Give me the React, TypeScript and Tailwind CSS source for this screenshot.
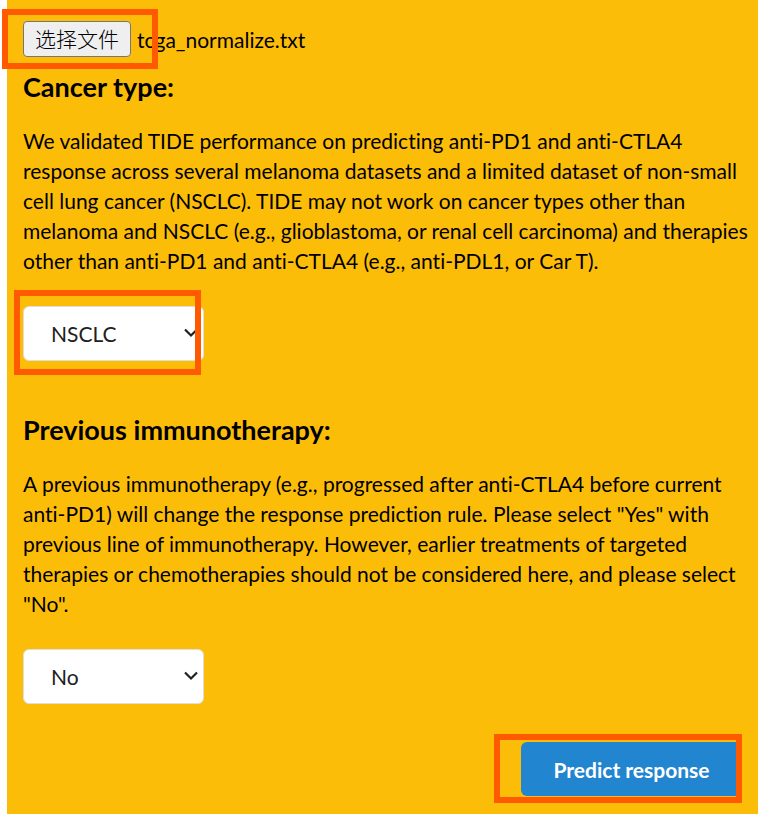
import { useRef, useState, type ReactNode } from "react";

type HighlightProps = { className: string };

/** Orange frame that calls attention to the control beneath it. */
function Highlight({ className }: HighlightProps) {
  return (
    <span
      aria-hidden="true"
      className={`pointer-events-none absolute border-[6px] border-[#ff5a00] ${className}`}
    />
  );
}

type SelectFieldProps = {
  id: string;
  labelledBy: string;
  options: string[];
  initial: string;
  children?: ReactNode;
};

function SelectField({ id, labelledBy, options, initial, children }: SelectFieldProps) {
  const [value, setValue] = useState(initial);
  return (
    <div className="relative mt-[30px] w-[181px]">
      <select
        id={id}
        aria-labelledby={labelledBy}
        value={value}
        onChange={(e) => setValue(e.target.value)}
        className="block h-[55px] w-full appearance-none rounded-md border border-[#dedede] bg-white pr-8 pl-[27px] text-[21px] text-[#212121]"
      >
        {options.map((option) => (
          <option key={option}>{option}</option>
        ))}
      </select>
      <svg
        aria-hidden="true"
        viewBox="0 0 14 10"
        className="pointer-events-none absolute top-[22px] right-[6px] h-[10px] w-[14px]"
        fill="none"
        stroke="#212121"
        strokeWidth="2.2"
      >
        <path d="M1 1.5 7 7.5 13 1.5" />
      </svg>
      {children}
    </div>
  );
}

export default function App() {
  const fileInput = useRef<HTMLInputElement>(null);
  const [fileName, setFileName] = useState("tcga_normalize.txt");

  return (
    <div className="min-h-screen bg-white pl-[7px] font-['Lato','Noto_Sans_CJK_SC',sans-serif] text-[21px] leading-[30px] text-black [font-variant-ligatures:none]">
      <form
        className="min-h-screen bg-[#fcbd09] px-4 pt-[21px] pb-[18px]"
        onSubmit={(e) => e.preventDefault()}
      >
        <div className="relative flex items-center gap-[6px]">
          <button
            type="button"
            onClick={() => fileInput.current?.click()}
            className="h-9 w-[108px] rounded-[4px] border border-[#767676] bg-[#efefef] pb-0.5 font-['Noto_Sans_CJK_SC',sans-serif] text-[21px] leading-[30px] font-light"
          >
            选择文件
          </button>
          <span className="pt-0.5">{fileName}</span>
          <input
            ref={fileInput}
            type="file"
            hidden
            aria-label="选择文件"
            onChange={(e) => setFileName(e.target.files?.[0]?.name ?? fileName)}
          />
          <Highlight className="-top-3 -left-[21px] h-[60px] w-[156px]" />
        </div>

        <h3 id="cancer-heading" className="mt-[13px] text-[27px] leading-[34px] font-bold">
          Cancer type:
        </h3>
        <p className="mt-[22px] -mr-3">
          We validated TIDE performance on predicting anti-PD1 and anti-CTLA4 response across
          several melanoma datasets and a limited dataset of non-small cell lung cancer (NSCLC).
          TIDE may not work on cancer types other than melanoma and NSCLC (e.g., glioblastoma, or
          renal cell carcinoma) and therapies other than anti-PD1 and anti-CTLA4 (e.g., anti-PDL1,
          or Car T).
        </p>
        <SelectField
          id="cancer"
          labelledBy="cancer-heading"
          options={["Melanoma", "NSCLC", "Other"]}
          initial="NSCLC"
        >
          <Highlight className="-top-4 -left-[9px] h-[85px] w-[187px]" />
        </SelectField>

        <h3 id="previous-heading" className="mt-[52px] text-[27px] leading-[34px] font-bold">
          Previous immunotherapy:
        </h3>
        <p className="mt-[22px] -mr-3">
          A previous immunotherapy (e.g., progressed after anti-CTLA4 before current anti-PD1) will
          change the response prediction rule. Please select "Yes" with previous line of
          immunotherapy. However, earlier treatments of targeted therapies or chemotherapies should
          not be considered here, and please select "No".
        </p>
        <SelectField
          id="previous"
          labelledBy="previous-heading"
          options={["Yes", "No"]}
          initial="No"
        />

        <div className="relative mt-[38px] ml-auto w-[221px]">
          <button
            type="submit"
            className="block h-[54px] w-full rounded-md bg-[#2185d0] pt-0.5 text-[21px] font-bold text-white"
          >
            Predict response
          </button>
          <Highlight className="-top-2 -left-[27px] h-[69px] w-[248px]" />
        </div>
      </form>
    </div>
  );
}
